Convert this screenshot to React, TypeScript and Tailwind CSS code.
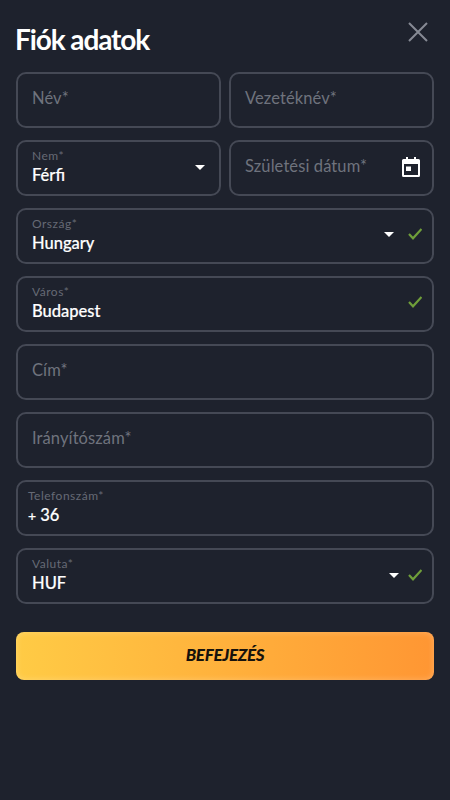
import type { ReactNode } from 'react';

const font = 'font-["Lato",sans-serif]';

function Caret() {
  return (
    <svg width="10" height="5" viewBox="0 0 10 5" className="shrink-0">
      <path d="M0 0h10L5 5z" fill="#fff" />
    </svg>
  );
}

function Check() {
  return (
    <svg width="14" height="12" viewBox="0 0 14 12" fill="none" className="shrink-0">
      <path d="M1 6l4 4.300L13.500 1" stroke="#6f9e3a" strokeWidth="2.200" />
    </svg>
  );
}

function CalendarIcon() {
  return (
    <svg width="18" height="20" viewBox="0 0 18 20" className="shrink-0 -mt-[2px]">
      <path
        fillRule="evenodd"
        d="M4 0h2v2h6V0h2v2h2.500A1.500 1.500 0 0 1 18 3.500v15a1.500 1.500 0 0 1-1.500 1.500h-15A1.500 1.500 0 0 1 0 18.500v-15A1.500 1.500 0 0 1 1.500 2H4zM2 7v11h14V7z"
        fill="#fff"
      />
      <rect x="4" y="9.500" width="5" height="4.500" fill="#fff" />
    </svg>
  );
}

function Placeholder({ text, right }: { text: string; right?: ReactNode }) {
  return (
    <div className="h-14 rounded-[10px] border-2 border-[#454955] pl-[14px] pr-[12px] flex items-center">
      <span className="flex-1 -mt-[4px] text-[16.5px] leading-6 tracking-[0.1px] text-[#6f737d]">{text}</span>
      {right}
    </div>
  );
}

function Filled({
  label,
  value,
  right,
  phone,
}: {
  label: string;
  value: ReactNode;
  right?: ReactNode;
  phone?: boolean;
}) {
  return (
    <div
      className={`h-14 rounded-[10px] border-2 border-[#454955] flex items-center pr-[10px] ${phone ? 'pl-[10px]' : 'pl-[14px]'}`}
    >
      <div className="flex-1 flex flex-col -mt-[2px]">
        <span className="text-[12px] leading-4 tracking-[0.5px] text-[#666a75]">{label}</span>
        <span className="text-[16.5px] leading-[22px] font-medium text-white [-webkit-text-stroke:0.2px_#fff]">{value}</span>
      </div>
      {right}
    </div>
  );
}

export default function App() {
  return (
    <div className={`w-[450px] h-[800px] bg-[#1e222d] px-4 ${font}`}>
      <div className="h-[72px] flex items-start justify-between">
        <h1 className="mt-[21px] -ml-[1px] text-[28px] leading-9 font-bold tracking-[-1.100px] text-white">Fiók adatok</h1>
        <svg width="20" height="20" viewBox="0 0 20 20" fill="none" className="mt-[22px] mr-[6px]">
          <path d="M1 1l18 18M19 1L1 19" stroke="#868a94" strokeWidth="2" />
        </svg>
      </div>
      <div className="flex flex-col gap-3">
        <div className="grid grid-cols-2 gap-2">
          <Placeholder text="Név*" />
          <Placeholder text="Vezetéknév*" />
        </div>
        <div className="grid grid-cols-2 gap-2">
          <Filled label="Nem*" value="Férfi" right={<div className="mr-[4px] -mt-[2px]"><Caret /></div>} />
          <Placeholder text="Születési dátum*" right={<CalendarIcon />} />
        </div>
        <Filled
          label="Ország*"
          value="Hungary"
          right={
            <div className="flex items-center gap-[14px] -mt-[4px]">
              <Caret />
              <Check />
            </div>
          }
        />
        <Filled label="Város*" value="Budapest" right={<div className="-mt-[4px]"><Check /></div>} />
        <Placeholder text="Cím*" />
        <Placeholder text="Irányítószám*" />
        <Filled label="Telefonszám*" value={<><span className="text-[14px]">+</span> 36</>} phone />
        <Filled
          label="Valuta*"
          value="HUF"
          right={
            <div className="flex items-center gap-[9px] -mt-[2px]">
              <Caret />
              <Check />
            </div>
          }
        />
      </div>
      <button className="mt-7 w-full h-12 rounded-lg bg-gradient-to-r from-[#ffcb45] to-[#ff9633] shadow-[inset_0_0_6px_rgba(255,255,255,0.25)] text-[17px] italic font-black tracking-[-0.300px] text-[#17120c] pb-[2px]">
        BEFEJEZÉS
      </button>
    </div>
  );
}
